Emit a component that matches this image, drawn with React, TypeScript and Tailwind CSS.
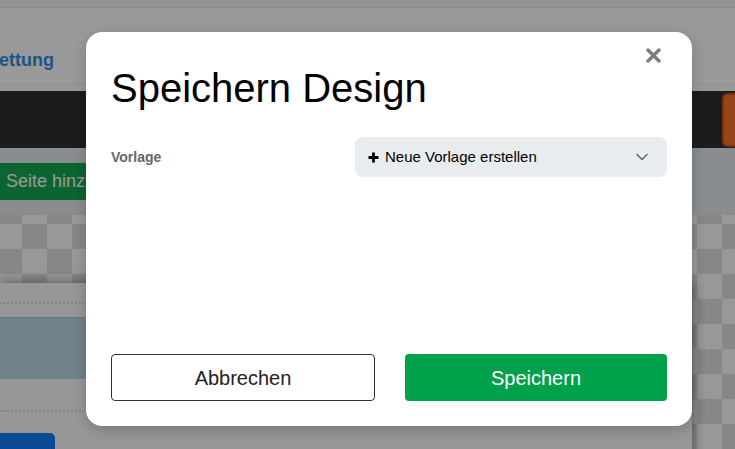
import React from "react";

function PlusIcon() {
  return (
    <svg width="11" height="11" viewBox="0 0 11 11" aria-hidden="true">
      <path d="M5.5 0.5v10M0.5 5.5h10" stroke="#000" strokeWidth="2.8" fill="none" />
    </svg>
  );
}

function ChevronIcon() {
  return (
    <svg width="12" height="8" viewBox="0 0 12 8" aria-hidden="true">
      <path d="M1 1.5l5 5 5-5" stroke="#6b6b6b" strokeWidth="1.6" fill="none" strokeLinecap="round" strokeLinejoin="round" />
    </svg>
  );
}

function CloseIcon() {
  return (
    <svg width="15" height="15" viewBox="0 0 15 15" aria-hidden="true">
      <path d="M2 2l11 11M13 2L2 13" stroke="#7d7d7d" strokeWidth="3.4" fill="none" strokeLinecap="round" />
    </svg>
  );
}

export default function App() {
  return (
    <div
      className="relative w-[735px] h-[449px] overflow-hidden bg-white"
      style={{ fontFamily: '"Liberation Sans", Arial, Helvetica, sans-serif' }}
    >
      {/* Editor page underneath the dialog */}
      <div className="flex flex-col h-full">
        {/* top navigation */}
        <div className="shrink-0 h-[7px] bg-[#f4f4f4]" />
        <div className="shrink-0 h-[77px] border-t border-[#e2e2e2] bg-white pt-[41px]">
          <div className="w-[54px] flex justify-end overflow-hidden whitespace-nowrap">
            <span className="text-[18px] leading-[22px] font-bold text-[#2f8fe0]">Einbettung</span>
          </div>
        </div>
        <div className="shrink-0 h-[7px] border-t border-[#ededed] bg-white" />

        {/* dark toolbar */}
        <div className="shrink-0 h-[57px] bg-[#2f2f2f] flex justify-end items-center">
          <div className="w-[13px] h-[54px] rounded-l-[6px] border-2 border-r-0 border-[#c9561f] bg-[#ff7227]" />
        </div>

        {/* page actions */}
        <div className="shrink-0 h-[67px] bg-[#e5ebf0] pt-[15px]">
          <button className="h-[37px] w-[140px] bg-[#11a850] text-white text-[18px] text-left pl-[6px] whitespace-nowrap">
            Seite hinzufügen
          </button>
        </div>

        {/* canvas */}
        <div
          className="flex-1 min-h-0 overflow-hidden pt-[68px]"
          style={{
            backgroundColor: "#fdfdfd",
            backgroundImage:
              "linear-gradient(45deg, #e2e2e2 25%, transparent 25%, transparent 75%, #e2e2e2 75%), linear-gradient(45deg, #e2e2e2 25%, transparent 25%, transparent 75%, #e2e2e2 75%)",
            backgroundSize: "50px 50px",
            backgroundPosition: "-3px 9px, 22px 34px",
          }}
        >
          <div className="w-[692px] h-[200px] bg-[#fcfcfc] shadow-[0_0_12px_rgba(0,0,0,0.45)] pt-[19px]">
            <div className="border-t-2 border-dotted border-[#dcdcdc]" />
            <div className="mt-[13px] h-[62px] bg-[#bad9e6] border-t border-[#a7c8d4]" />
            <div className="mt-[31px] border-t-2 border-dotted border-[#dcdcdc]" />
            <div className="mt-[21px] w-[55px] h-[30px] rounded-tr-[5px] bg-[#137cf8]" />
          </div>
        </div>
      </div>

      {/* backdrop */}
      <div className="absolute inset-0 bg-black/40" />

      {/* save dialog */}
      <div className="absolute left-[86px] top-[32px] w-[606px] h-[394px] rounded-[16px] bg-white p-[25px] flex flex-col shadow-[0_4px_14px_rgba(0,0,0,0.2)]">
        <button className="absolute top-[16px] right-[31px] w-[15px] h-[15px] flex items-center justify-center">
          <CloseIcon />
        </button>

        <h2 className="mt-[8px] text-[40px] leading-[46px] text-black font-normal">Speichern Design</h2>

        <div className="mt-[26px] flex items-center">
          <div className="flex-1 text-[14px] font-bold text-[#666]">Vorlage</div>
          <div className="w-[312px] h-[40px] rounded-[8px] bg-[#e9ecef] pl-[13px] pr-[19px] flex items-center">
            <PlusIcon />
            <span className="ml-[6px] text-[15px] text-black">Neue Vorlage erstellen</span>
            <span className="ml-auto flex items-center">
              <ChevronIcon />
            </span>
          </div>
        </div>

        <div className="flex-1" />

        <div className="flex gap-[30px]">
          <button className="flex-1 h-[47px] rounded-[4px] border border-[#333] bg-white text-[20px] text-[#222]">
            Abbrechen
          </button>
          <button className="flex-1 h-[47px] rounded-[4px] bg-[#00a14b] text-[20px] text-white">
            Speichern
          </button>
        </div>
      </div>
    </div>
  );
}
